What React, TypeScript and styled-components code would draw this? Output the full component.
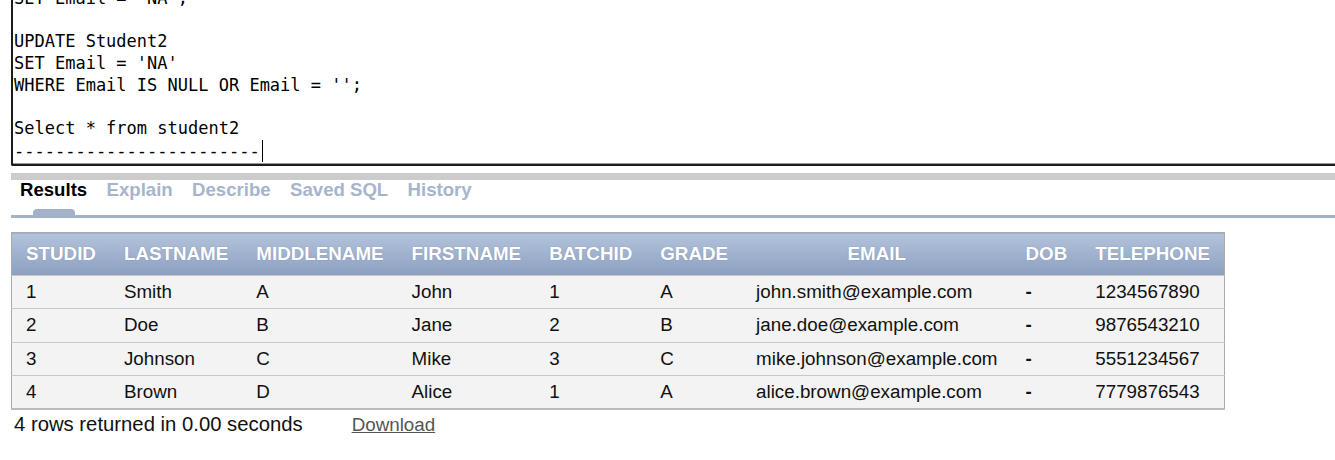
import React from 'react'
import styled, { createGlobalStyle } from 'styled-components'

const GlobalStyle = createGlobalStyle`
    html, body {
        margin: 0;
        padding: 0;
        background: #fff;
        overflow: hidden;
    }
    body {
        font-family: 'Liberation Sans', Arial, sans-serif;
        color: #000;
    }
`

const sqlLines = [
    "SET Email = 'NA';",
    '',
    'UPDATE Student2',
    "SET Email = 'NA'",
    "WHERE Email IS NULL OR Email = '';",
    '',
    'Select * from student2',
]

const tabs = ['Results', 'Explain', 'Describe', 'Saved SQL', 'History']

const columns = [
    'STUDID',
    'LASTNAME',
    'MIDDLENAME',
    'FIRSTNAME',
    'BATCHID',
    'GRADE',
    'EMAIL',
    'DOB',
    'TELEPHONE',
]

const rows = [
    ['1', 'Smith', 'A', 'John', '1', 'A', 'john.smith@example.com', '-', '1234567890'],
    ['2', 'Doe', 'B', 'Jane', '2', 'B', 'jane.doe@example.com', '-', '9876543210'],
    ['3', 'Johnson', 'C', 'Mike', '3', 'C', 'mike.johnson@example.com', '-', '5551234567'],
    ['4', 'Brown', 'D', 'Alice', '1', 'A', 'alice.brown@example.com', '-', '7779876543'],
]

const App = () => {
    return (
        <>
            <GlobalStyle />
            <Page>
                <Editor>
                    <Code>
                        {sqlLines.map((line, i) => (
                            <Line key={i}>{line || ' '}</Line>
                        ))}
                        <Line>
                            {'------------------------'}
                            <Caret />
                        </Line>
                    </Code>
                </Editor>
                <Splitter />
                <TabBar>
                    {tabs.map((tab, i) => (
                        <Tab key={tab}>
                            <TabLabel active={i === 0}>{tab}</TabLabel>
                            {i === 0 ? <Indicator /> : null}
                        </Tab>
                    ))}
                </TabBar>
                <Report>
                    <thead>
                        <tr>
                            {columns.map((col) => (
                                <HeadCell key={col}>{col}</HeadCell>
                            ))}
                        </tr>
                    </thead>
                    <tbody>
                        {rows.map((row) => (
                            <Row key={row[0]}>
                                {row.map((cell, i) => (
                                    <Cell key={i} bold={cell === '-'}>
                                        {cell}
                                    </Cell>
                                ))}
                            </Row>
                        ))}
                    </tbody>
                </Report>
                <Footer>
                    <span>4 rows returned in 0.00 seconds</span>
                    <DownloadLink href="#">Download</DownloadLink>
                </Footer>
            </Page>
        </>
    )
}

export default App

const Page = styled.div`
    padding-left: 11px;
    width: 1335px;
    box-sizing: border-box;
`

const Editor = styled.div`
    height: 166px;
    box-sizing: border-box;
    width: 1340px;
    overflow: hidden;
    border-left: 2px solid #1c1c1c;
    border-bottom: 2px solid #1c1c1c;
    border-bottom-left-radius: 2px;
    box-shadow: 0 -1px 0 #999 inset;
    background: #fff;
`

const Code = styled.div`
    margin-top: -12px;
    padding-left: 1px;
    font-family: 'DejaVu Sans Mono', 'Liberation Mono', monospace;
    font-size: 17px;
    line-height: 21.7px;
    color: #000;
`

const Line = styled.div`
    white-space: pre;
    height: 21.7px;
`

const Caret = styled.span`
    display: inline-block;
    width: 1px;
    height: 22px;
    margin-left: 2px;
    vertical-align: -5px;
    background: #000;
`

const Splitter = styled.div`
    margin-top: 7px;
    height: 7px;
    background: #cccccc;
`

const TabBar = styled.div`
    display: flex;
    gap: 19.4px;
    padding-left: 9px;
    height: 35px;
    border-bottom: 3px solid #a4b2c9;
`

const Tab = styled.div`
    display: flex;
    flex-direction: column;
    align-items: center;
    cursor: pointer;
`

const TabLabel = styled.span<{ active?: boolean }>`
    font-family: 'Liberation Sans', Arial, sans-serif;
    font-size: 18.6px;
    font-weight: bold;
    line-height: 20px;
    color: ${(props) => (props.active ? '#000' : '#a6b5cc')};
`

const Indicator = styled.div`
    margin-top: auto;
    width: 42px;
    height: 6px;
    border-radius: 4px 4px 0 0;
    background: #a4b2c9;
`

const Report = styled.table`
    margin-top: 14px;
    border-collapse: collapse;
    border: 1px solid #aaaaaa;
    border-bottom: 2px solid #bbbbbb;
    font-family: 'Liberation Sans', Arial, sans-serif;
    font-size: 18.8px;
`

const HeadCell = styled.th`
    height: 41px;
    padding: 0 14px 1px;
    text-align: center;
    white-space: nowrap;
    font-weight: bold;
    color: #fff;
    text-shadow: 0 0 1px rgba(60, 80, 120, 0.35);
    background: linear-gradient(#b3c3dc, #8c9fbf);
`

const Row = styled.tr`
    background: #f3f3f3;
    border-top: 1px solid #c8c8c8;
`

const Cell = styled.td<{ bold?: boolean }>`
    height: 32.3px;
    padding: 0 14px;
    text-align: left;
    white-space: nowrap;
    color: #111;
    font-weight: ${(props) => (props.bold ? 'bold' : 'normal')};
`

const Footer = styled.div`
    display: flex;
    align-items: baseline;
    gap: 49px;
    margin-top: 3px;
    padding-left: 3px;
    font-size: 20.3px;
    line-height: 22px;
    color: #111;
`

const DownloadLink = styled.a`
    font-size: 18.8px;
    color: #555;
    text-decoration: underline;
`
